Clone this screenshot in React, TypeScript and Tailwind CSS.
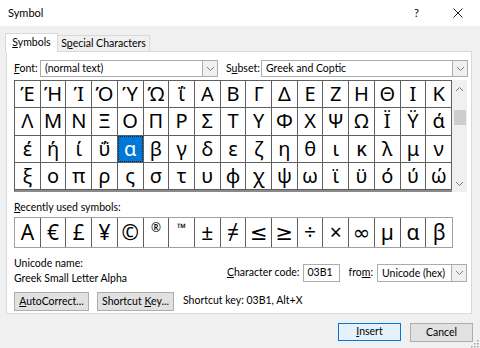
const font = { fontFamily: 'Lato, "Noto Sans", sans-serif' };
const glyphFont = { fontFamily: '"Noto Sans", "DejaVu Sans", sans-serif' };

const greek = [
  ["Έ", "Ή", "Ί", "Ό", "Ύ", "Ώ", "ΐ", "Α", "Β", "Γ", "Δ", "Ε", "Ζ", "Η", "Θ", "Ι", "Κ"],
  ["Λ", "Μ", "Ν", "Ξ", "Ο", "Π", "Ρ", "Σ", "Τ", "Υ", "Φ", "Χ", "Ψ", "Ω", "Ϊ", "Ϋ", "ά"],
  ["έ", "ή", "ί", "ΰ", "α", "β", "γ", "δ", "ε", "ζ", "η", "θ", "ι", "κ", "λ", "μ", "ν"],
  ["ξ", "ο", "π", "ρ", "ς", "σ", "τ", "υ", "φ", "χ", "ψ", "ω", "ϊ", "ϋ", "ό", "ύ", "ώ"],
];

const recent = ["A", "€", "£", "¥", "©", "®", "™", "±", "≠", "≤", "≥", "÷", "×", "∞", "µ", "α", "β"];

const Chevron = ({ up = false }: { up?: boolean }) => (
  <svg width="9" height="6" viewBox="0 0 9 6">
    <polyline
      points={up ? "1,5 4.5,1.5 8,5" : "1,1 4.5,4.5 8,1"}
      fill="none"
      stroke="#7a7a7a"
      strokeWidth="1"
    />
  </svg>
);

const Select = ({ value, className }: { value: string; className: string }) => (
  <div className={`flex h-[17px] items-center border border-[#acacac] bg-white ${className}`}>
    <span className="flex-1 whitespace-nowrap pl-[4px] leading-none">{value}</span>
    <div className="flex h-full w-[15px] items-center justify-center border-l border-[#acacac] bg-[#f0f0f0]">
      <Chevron />
    </div>
  </div>
);

const Button = ({ children, className = "" }: { children: React.ReactNode; className?: string }) => (
  <div
    className={`flex h-[19px] items-center justify-center whitespace-nowrap border border-[#adadad] bg-[#e1e1e1] leading-none ${className}`}
  >
    {children}
  </div>
);

export default function App() {
  return (
    <div className="flex h-[348px] w-[480px] flex-col bg-[#f0f0f0] text-[10.5px] text-black" style={font}>
      {/* title bar */}
      <div className="flex h-[26px] items-center bg-white pl-[8px] text-[11px]">
        <span className="flex-1">Symbol</span>
        <span className="mr-[34px] text-[11px]">?</span>
        <svg width="10" height="10" viewBox="0 0 10 10" className="mr-[17px]">
          <path d="M0.5 0.5 L9.5 9.5 M9.5 0.5 L0.5 9.5" stroke="#222" strokeWidth="1" />
        </svg>
      </div>

      {/* tabs */}
      <div className="mt-[7px] flex items-end whitespace-nowrap pl-[5px]">
        <div className="relative z-10 -mb-px flex h-[19px] w-[53px] items-center justify-center border border-b-0 border-[#d9d9d9] bg-white">
          <span>
            <u>S</u>ymbols
          </span>
        </div>
        <div className="flex h-[16px] w-[92px] items-center justify-center border border-b-0 border-l-0 border-[#d9d9d9]">
          <span>
            S<u>p</u>ecial Characters
          </span>
        </div>
      </div>

      {/* panel */}
      <div className="ml-[6px] flex h-[263px] w-[466px] flex-col whitespace-nowrap border border-[#d9d9d9] bg-white pl-[7px]">
        <div className="mt-[8px] flex items-center">
          <span className="w-[26px]">
            <u>F</u>ont:
          </span>
          <Select value="(normal text)" className="w-[178px]" />
          <span className="ml-[8px] w-[35px]">
            S<u>u</u>bset:
          </span>
          <Select value="Greek and Coptic" className="w-[207px]" />
        </div>

        {/* symbol grid */}
        <div className="mt-[3px] flex h-[112px]">
          <div
            className="grid h-[112px] w-[438px] grid-cols-[repeat(17,1fr)] grid-rows-4 border-l border-t border-[#5f5f5f] border-b-2 border-b-[#8a8a8a]"
            style={glyphFont}
          >
            {greek.flat().map((c, i) => (
              <div
                key={i}
                className="flex items-center justify-center border-b border-r border-[#5f5f5f] text-[20px] leading-none"
              >
                {i === 38 ? (
                  <div className="flex h-full w-full items-center justify-center bg-[#0078d7] text-white outline-1 outline-dotted outline-[#222] -outline-offset-1">
                    {c}
                  </div>
                ) : (
                  c
                )}
              </div>
            ))}
          </div>
          <div className="flex w-[15px] flex-col items-center bg-[#f0f0f0]">
            <div className="mt-[6px]">
              <Chevron up />
            </div>
            <div className="mt-[18px] h-[15px] w-[12px] bg-[#cdcdcd]" />
            <div className="flex-1" />
            <div className="mb-[5px]">
              <Chevron />
            </div>
          </div>
        </div>

        {/* recently used */}
        <div className="mt-[10px] leading-none">
          <u>R</u>ecently used symbols:
        </div>
        <div
          className="mt-[4px] grid h-[31px] w-[439px] grid-cols-[repeat(17,1fr)] border border-[#a0a0a0]"
          style={glyphFont}
        >
          {recent.map((c, i) => (
            <div
              key={i}
              className={`flex items-center justify-center border-[#5f5f5f] leading-none ${
                i < 16 ? "border-r" : ""
              } ${c === "®" || c === "™" ? "pb-[8px] text-[12px]" : "text-[21px]"}`}
            >
              {c}
            </div>
          ))}
        </div>

        {/* info */}
        <div className="mt-[10px] flex">
          <div className="flex-1 leading-none">
            <div>Unicode name:</div>
            <div className="mt-[5px]">Greek Small Letter Alpha</div>
          </div>
          <div className="mr-[4px] mt-[5px] flex items-center">
            <span>
              <u>C</u>haracter code:
            </span>
            <div className="ml-[4px] flex h-[18px] w-[37px] items-center border border-[#acacac] pl-[3px]">03B1</div>
            <span className="ml-[8px]">
              fro<u>m</u>:
            </span>
            <Select value="Unicode (hex)" className="ml-[4px] h-[18px] w-[90px]" />
          </div>
        </div>

        <div className="mt-[8px] flex items-center">
          <Button className="w-[75px]">
            <span>
              <u>A</u>utoCorrect...
            </span>
          </Button>
          <Button className="ml-[8px] w-[77px]">
            <span>
              Shortcut <u>K</u>ey...
            </span>
          </Button>
          <span className="ml-[9px]">Shortcut key: 03B1, Alt+X</span>
        </div>
      </div>

      {/* footer */}
      <div className="relative mt-[9px] flex">
        <div className="ml-[338px] flex h-[18px] w-[63px] items-center justify-center border border-[#0078d7] bg-[#e5f1fb]">
          <span>
            <u>I</u>nsert
          </span>
        </div>
        <Button className="ml-[9px] h-[18px] w-[63px]">Cancel</Button>
        <svg width="10" height="10" viewBox="0 0 10 10" className="absolute right-0 top-[16px]">
          <rect x="7" y="1" width="1.5" height="1.5" fill="#a0a0a0" />
          <rect x="4" y="4" width="1.5" height="1.5" fill="#a0a0a0" />
          <rect x="7" y="4" width="1.5" height="1.5" fill="#a0a0a0" />
          <rect x="1" y="7" width="1.5" height="1.5" fill="#a0a0a0" />
          <rect x="4" y="7" width="1.5" height="1.5" fill="#a0a0a0" />
          <rect x="7" y="7" width="1.5" height="1.5" fill="#a0a0a0" />
        </svg>
      </div>
    </div>
  );
}
